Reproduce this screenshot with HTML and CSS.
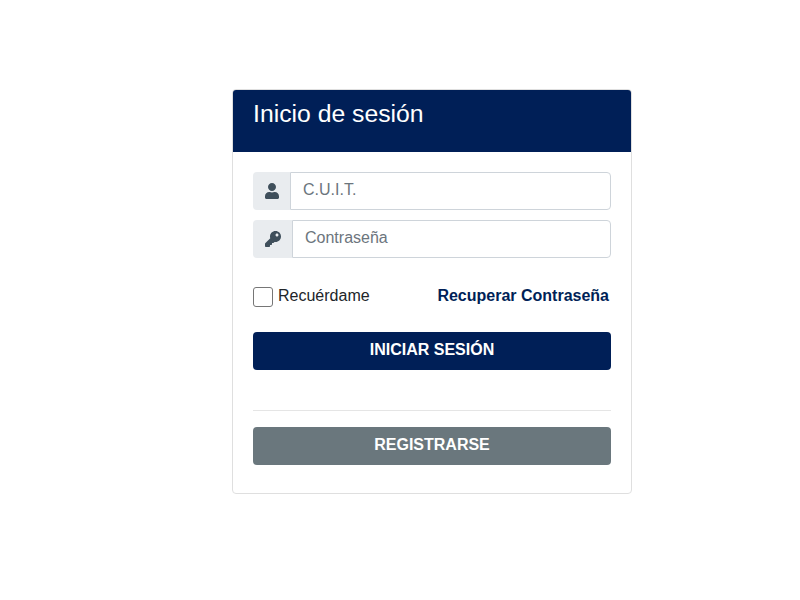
FILE: index.html
```html
<!DOCTYPE html>
<html lang="es">
<head>
<meta charset="utf-8">
<title>Inicio de sesión</title>
<link rel="stylesheet" href="styles.css">
</head>
<body>
<main class="card">
  <header class="card-header"><h1>Inicio de sesión</h1></header>
  <form class="card-body">
    <div class="input-group">
      <span class="addon"><svg class="icon-user" viewBox="0 0 448 512"><path d="M224 256c70.7 0 128-57.3 128-128S294.7 0 224 0 96 57.3 96 128s57.3 128 128 128zm89.6 32h-16.7c-22.2 10.2-46.9 16-72.9 16s-50.6-5.8-72.9-16h-16.7C60.2 288 0 348.2 0 422.4V464c0 26.5 21.5 48 48 48h352c26.5 0 48-21.5 48-48v-41.6c0-74.2-60.2-134.4-134.4-134.4z"/></svg></span>
      <input class="field" type="text" placeholder="C.U.I.T.">
    </div>
    <div class="input-group">
      <span class="addon"><svg class="icon-key" viewBox="0 0 512 512"><path d="M512 176.001C512 273.203 433.202 352 336 352c-11.22 0-22.19-1.062-32.827-3.069l-24.012 27.014A23.999 23.999 0 0 1 261.223 384H224v40c0 13.255-10.745 24-24 24h-40v40c0 13.255-10.745 24-24 24H24c-13.255 0-24-10.745-24-24v-78.059c0-6.365 2.529-12.47 7.029-16.971l161.802-161.802C163.108 213.814 160 195.271 160 176 160 78.798 238.797.001 335.999 0 433.488-.001 512 78.511 512 176.001zM336 128c0 26.51 21.49 48 48 48s48-21.49 48-48-21.49-48-48-48-48 21.49-48 48z"/></svg></span>
      <input class="field" type="password" placeholder="Contraseña">
    </div>
    <div class="options">
      <label class="remember"><input class="check" type="checkbox"><span class="remember-text">Recuérdame</span></label>
      <a class="recover" href="#">Recuperar Contraseña</a>
    </div>
    <button class="btn btn-primary" type="button">INICIAR SESIÓN</button>
    <hr class="divider">
    <button class="btn btn-secondary" type="button">REGISTRARSE</button>
  </form>
</main>
</body>
</html>
```
FILE: styles.css
```css
* { box-sizing: border-box; }
html, body { margin: 0; padding: 0; background: #fff; }
body {
  font-family: "Liberation Sans", Arial, sans-serif;
  font-size: 16px;
  color: #212529;
  padding: 89px 0 0 232px;
}
.card {
  width: 400px;
  height: 405px;
  border: 1px solid #dfdfdf;
  border-radius: 4px;
  overflow: hidden;
}
.card-header {
  height: 62px;
  background: #001f57;
  padding: 12px 20px;
}
.card-header h1 {
  margin: 0;
  font-size: 24.75px;
  font-weight: 400;
  line-height: 24px;
  color: #fff;
}
.card-body { padding: 20px; }
.input-group {
  display: flex;
  height: 38px;
  margin-bottom: 10px;
}
.addon {
  display: flex;
  align-items: center;
  padding: 0 11px 0 12px;
  background: #e9ecef;
  border-radius: 4px 0 0 4px;
}
.addon svg { display: block; height: 16px; fill: #3f4f5b; }
.icon-user { width: 14px; }
.icon-key { width: 16px; }
.field {
  flex: 1;
  min-width: 0;
  height: 38px;
  padding: 4px 12px 6px;
  border: 1px solid #ced4da;
  border-radius: 0 4px 4px 0;
  font: 16px/24px "Liberation Sans", Arial, sans-serif;
  color: #495057;
  background: #fff;
  outline: none;
}
.field::placeholder { color: #6c757d; opacity: 1; }
.options {
  display: flex;
  align-items: center;
  justify-content: space-between;
  height: 20px;
  margin-top: 29px;
  padding-right: 2px;
}
.remember { display: flex; align-items: center; gap: 5px; }
.remember-text, .recover { padding-bottom: 2px; }
.check {
  appearance: none;
  width: 20px;
  height: 20px;
  margin: 0;
  background: #fff;
  border: 1px solid #767676;
  border-radius: 3px;
}
.recover {
  font-weight: 700;
  color: #001f57;
  text-decoration: none;
}
.btn {
  display: block;
  width: 100%;
  height: 38px;
  padding: 0 12px 2px;
  border: 0;
  border-radius: 4px;
  font: 700 16px/24px "Liberation Sans", Arial, sans-serif;
  color: #fff;
  text-align: center;
}
.btn-primary { background: #001f57; margin-top: 25px; }
.btn-secondary { background: #6a777d; }
.divider {
  height: 1px;
  margin: 40px 0 16px;
  border: 0;
  background: #e5e5e5;
}
```
